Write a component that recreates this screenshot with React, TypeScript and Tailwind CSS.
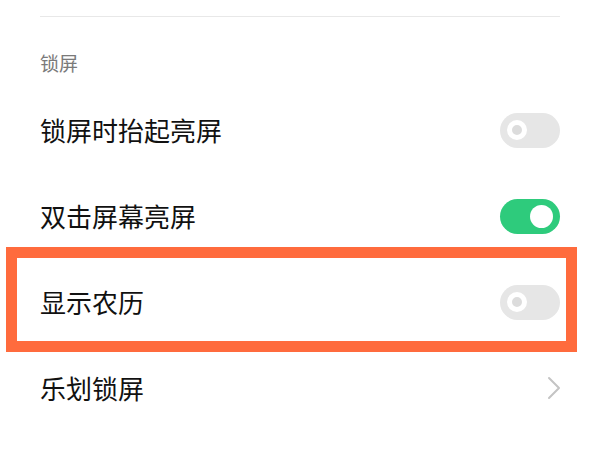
import React, { useState } from 'react';

type Item = { label: string; kind: 'toggle' | 'link'; on?: boolean; marked?: boolean };

const items: Item[] = [
  { label: '锁屏时抬起亮屏', kind: 'toggle', on: false },
  { label: '双击屏幕亮屏', kind: 'toggle', on: true },
  { label: '显示农历', kind: 'toggle', on: false, marked: true },
  { label: '乐划锁屏', kind: 'link' },
];

const Toggle = ({ on, onClick }: { on: boolean; onClick: () => void }) => (
  <button
    onClick={onClick}
    className={`relative w-[60px] h-[35px] rounded-full flex items-center shrink-0 ${on ? 'bg-[#2ecb7c]' : 'bg-[#e6e6e6]'}`}
  >
    {on ? (
      <span className="absolute right-[7px] w-[23px] h-[23px] rounded-full bg-white" />
    ) : (
      <span className="absolute left-[7px] w-[20px] h-[20px] rounded-full border-[5px] border-white bg-[#dcdcdc]" />
    )}
  </button>
);

export default function App() {
  const [state, setState] = useState(items.map(i => !!i.on));

  return (
    <div
      className="w-[600px] h-[450px] bg-white overflow-hidden pt-4"
      style={{ fontFamily: '"Noto Sans CJK SC", "Noto Sans", sans-serif' }}
    >
      <div className="mx-10 h-px bg-[#e8e8e8]" />

      <div className="px-10 pt-[33px] h-[70px] text-[19px] leading-[26px] text-[#7a7a7a]">锁屏</div>

      {items.map((item, idx) => (
        <div key={item.label} className="relative h-[86px] px-10 flex items-center justify-between">
          {/* highlight box */}
          {item.marked && (
            <div className="absolute left-[6px] right-[23px] -top-3 -bottom-[7px] border-[11px] border-[#ff6b3d] pointer-events-none" />
          )}
          <span className="text-[26px] leading-none text-[#111]">{item.label}</span>
          {item.kind === 'toggle' ? (
            <Toggle
              on={state[idx]}
              onClick={() => setState(s => s.map((v, i) => (i === idx ? !v : v)))}
            />
          ) : (
            <svg width="14" height="24" viewBox="0 0 14 24" className="mr-[-1px]">
              <path d="M2 2 L12 12 L2 22" fill="none" stroke="#c4c4c4" strokeWidth="2" strokeLinecap="round" strokeLinejoin="round" />
            </svg>
          )}
        </div>
      ))}
    </div>
  );
}
